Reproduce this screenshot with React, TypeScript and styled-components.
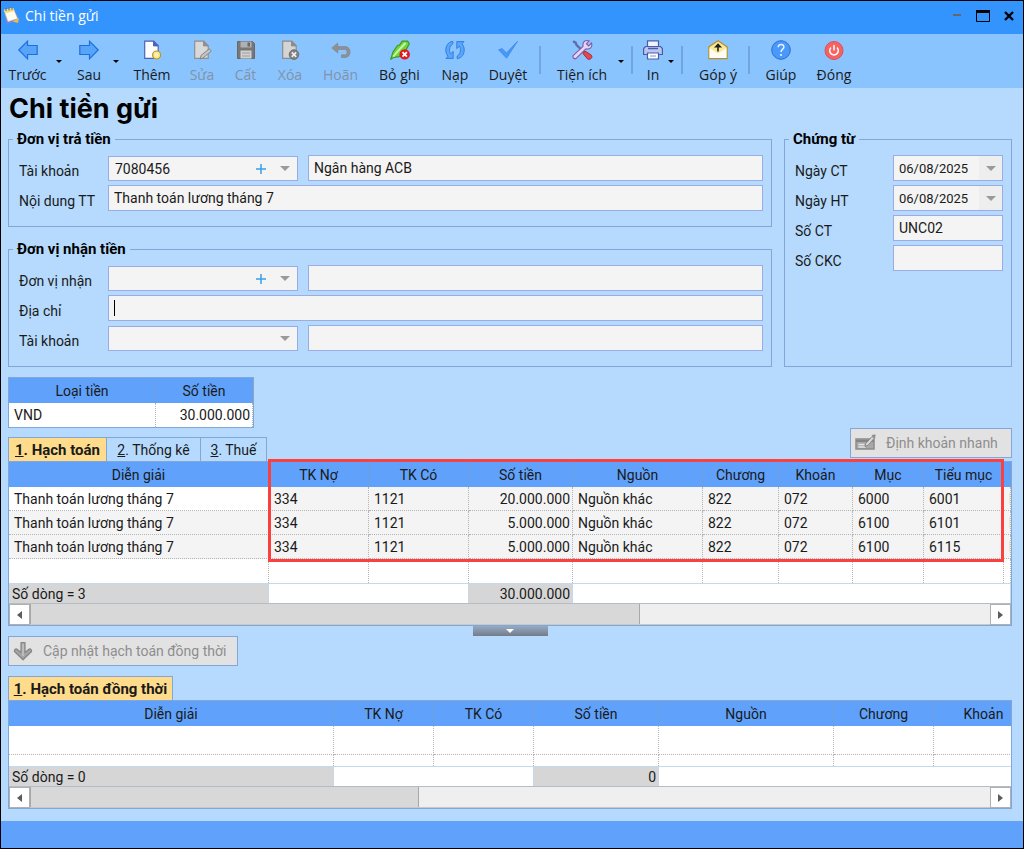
import React from "react";
import styled, { createGlobalStyle } from "styled-components";

const c = {
  page: "#b5dafe",
  title: "#3394fe",
  toolbar: "#8ac4ff",
  grid: "#60a2fb",
  line: "#83a6d6",
  field: "#f4f4f4",
  fieldLine: "#9aace4",
  dots: "#b4b4b4",
  grey: "#d6d6d6",
  soft: "#c5d9ec",
  orange: "#ffdc8c",
  text: "#1a1a1a",
};

const uiFont = `Roboto, "Liberation Sans", sans-serif`;
const barFont = `"Open Sans", "Noto Sans", sans-serif`;

const GlobalStyle = createGlobalStyle`
  *, *::before, *::after { box-sizing: border-box; }
  body { margin: 0; background: ${c.page}; }
  button, input, select { font: inherit; color: inherit; margin: 0; padding: 0; }
  svg { display: block; flex: none; }
`;

const Window = styled.div`
  display: flex;
  flex-direction: column;
  min-height: 100vh;
  border: 1px solid #000;
  background: ${c.page};
  color: ${c.text};
  font-family: ${uiFont};
  font-size: 14px;
  line-height: 18px;
`;

const TitleBar = styled.header`
  display: flex;
  align-items: center;
  height: 33px;
  padding: 0 4px 4px 2px;
  gap: 6px;
  background: ${c.title};
  color: #fff;
  font-family: ${barFont};
`;

const WindowTitle = styled.span`
  flex: 1;
`;

const WindowButton = styled.button`
  display: flex;
  justify-content: center;
  align-items: center;
  width: 20px;
  height: 20px;
  border: 0;
  background: none;
`;

const Toolbar = styled.nav`
  display: flex;
  height: 54px;
  padding: 6px 0 0;
  background: ${c.toolbar};
  font-family: ${barFont};
`;

const ToolButton = styled.button<{ $width: number }>`
  display: flex;
  flex-direction: column;
  align-items: center;
  gap: 6px;
  width: ${(p) => p.$width}px;
  height: 46px;
  border: 0;
  background: none;
  white-space: nowrap;
  &:disabled {
    color: #8193a8;
  }
`;

const MoreButton = styled.button`
  display: flex;
  justify-content: center;
  align-items: center;
  width: 10px;
  height: 42px;
  margin-right: 3px;
  border: 0;
  background: none;
`;

const Separator = styled.span`
  width: 2px;
  height: 28px;
  margin: 6px 7px 0 2px;
  background: #72a4de;
`;

const Main = styled.main`
  flex: 1;
  padding: 0 11px 12px 7px;
`;

const Heading = styled.h1`
  margin: 0;
  padding: 5px 1px 5px;
  font-family: Inter, "Liberation Sans", sans-serif;
  font-size: 27px;
  line-height: 32px;
  font-weight: 700;
  color: #000;
`;

const FormArea = styled.div`
  display: grid;
  grid-template-columns: 1fr 228px;
  gap: 12px;
`;

const FormColumn = styled.div`
  display: flex;
  flex-direction: column;
  gap: 13px;
`;

const Group = styled.fieldset`
  min-width: 0;
  margin: 0;
  padding: 7px 8px 15px 10px;
  border: 1px solid ${c.line};
`;

const Legend = styled.legend`
  margin-left: -6px;
  padding: 0 4px;
  font-size: 15px;
  font-weight: 700;
  color: #000;
`;

const Rows = styled.div`
  display: flex;
  flex-direction: column;
  gap: 4px;
`;

const Row = styled.div<{ $label: number }>`
  display: grid;
  grid-template-columns: ${(p) => p.$label}px 1fr;
  height: 26px;
`;

const Label = styled.label`
  padding-top: 7px;
`;

const Fields = styled.div`
  display: flex;
  align-items: flex-end;
  gap: 10px;
  min-width: 0;
`;

const TextBox = styled.div`
  display: flex;
  flex: 1;
  align-items: center;
  min-width: 0;
  height: 26px;
  padding: 0 5px;
  border: 1px solid ${c.fieldLine};
  background: ${c.field};
`;

const Input = styled.input`
  flex: 1;
  min-width: 0;
  height: 24px;
  border: 0;
  outline: 0;
  background: none;
`;

const DateInput = styled(Input)`
  font-size: 13px;
`;

const Caret = styled.span`
  width: 1px;
  height: 16px;
  background: #000;
`;

const ComboBox = styled.div`
  display: grid;
  grid-template-columns: 1fr 24px 24px;
  align-items: center;
  justify-items: center;
  flex: none;
  width: 190px;
  height: 25px;
  border: 1px solid ${c.fieldLine};
  background: ${c.field};
`;

const Select = styled.select`
  grid-area: 1 / 1 / 2 / 4;
  justify-self: stretch;
  height: 23px;
  padding: 0 6px;
  border: 0;
  background: none;
  appearance: none;
`;

const AddButton = styled.button`
  grid-area: 1 / 2 / 2 / 3;
  border: 0;
  background: none;
`;

const ComboArrow = styled.span`
  grid-area: 1 / 3 / 2 / 4;
  pointer-events: none;
`;

const DateButton = styled.button`
  display: flex;
  align-items: center;
  justify-content: center;
  align-self: stretch;
  width: 23px;
  margin-right: -5px;
  border: 0;
  background: #eee;
`;

const CurrencyTable = styled.table`
  width: 246px;
  margin: 10px 0 9px;
  table-layout: fixed;
  border: 1px solid ${c.line};
  border-spacing: 0;
  background: #fff;
`;

const Grid = styled.div`
  position: relative;
  border: 1px solid ${c.line};
`;

const Clip = styled.div`
  overflow: hidden;
  background: #fff;
`;

const DataTable = styled.table<{ $min: number }>`
  width: 100%;
  min-width: ${(p) => p.$min}px;
  table-layout: fixed;
  border-spacing: 0;
`;

const Th = styled.th`
  height: 25px;
  padding: 0;
  border-right: 1px solid #6d9fe0;
  background: ${c.grid};
  font-weight: 400;
  white-space: nowrap;
  overflow: hidden;
`;

const Td = styled.td<{ $shade?: boolean; $right?: boolean; $height?: number; $open?: boolean }>`
  height: ${(p) => p.$height ?? 24}px;
  padding: 0 2px 0 5px;
  border-right: 1px dotted ${c.dots};
  border-bottom: ${(p) => (p.$open ? "0" : `1px dotted ${c.dots}`)};
  background: ${(p) => (p.$shade ? c.field : "#fff")};
  text-align: ${(p) => (p.$right ? "right" : "left")};
  white-space: nowrap;
  overflow: hidden;
`;

const SumCell = styled.td<{ $fill?: boolean; $right?: boolean }>`
  height: 20px;
  padding: 0 2px 0 3px;
  border-top: 1px solid ${c.soft};
  border-right: 1px solid ${c.soft};
  background: ${(p) => (p.$fill ? c.grey : "#fff")};
  text-align: ${(p) => (p.$right ? "right" : "left")};
  line-height: 16px;
`;

const ScrollBar = styled.div`
  display: flex;
  height: 22px;
  border-top: 1px solid #b4bcc6;
  background: #efefef;
`;

const ScrollButton = styled.button`
  display: flex;
  align-items: center;
  justify-content: center;
  flex: none;
  width: 21px;
  border: 1px solid #b0b0b0;
  background: #fff;
`;

const Track = styled.div`
  flex: 1;
  border-bottom: 1px solid #c8c8c8;
`;

const Thumb = styled.div<{ $share: number }>`
  width: ${(p) => p.$share}%;
  height: 100%;
  border-right: 1px solid #a8a8a8;
  border-left: 1px solid #a8a8a8;
  background: #d8d8d8;
`;

const TabBar = styled.div`
  display: flex;
  align-items: flex-end;
  justify-content: space-between;
`;

const TabList = styled.div`
  display: flex;
  height: 24px;
`;

const Tab = styled.button<{ $width: number; $active?: boolean }>`
  width: ${(p) => p.$width}px;
  border: 1px solid ${c.line};
  border-bottom: 0;
  background: ${(p) => (p.$active ? c.orange : c.page)};
  font-size: ${(p) => (p.$active ? 15 : 14)}px;
  font-weight: ${(p) => (p.$active ? 700 : 400)};
  white-space: nowrap;
  & + & {
    border-left: 0;
  }
`;

const ActionButton = styled.button<{ $width: number }>`
  display: flex;
  align-items: center;
  gap: 10px;
  width: ${(p) => p.$width}px;
  height: 30px;
  padding: 0 4px;
  border: 1px solid ${c.line};
  background: #e2e2e2;
  white-space: nowrap;
  &:disabled {
    color: #8e8e8e;
  }
`;

const QuickWrap = styled.div`
  padding-bottom: 3px;
  margin-top: -9px;
`;

const Splitter = styled.button`
  display: flex;
  align-items: center;
  justify-content: center;
  width: 75px;
  height: 10px;
  margin: 0 auto;
  border: 0;
  background: linear-gradient(#94aac6, #747c88);
`;

const UpdateRow = styled.div`
  padding-bottom: 10px;
`;

const Highlight = styled.div`
  position: absolute;
  top: -3px;
  left: 259px;
  width: 736px;
  height: 103px;
  border: 3px solid #fb4040;
  pointer-events: none;
`;

const StatusBar = styled.footer`
  height: 27px;
  background: ${c.grid};
`;

const Down = ({ fill = "#9a9a9a", w = 10 }: { fill?: string; w?: number }) => (
  <svg width={w} height={w / 2} viewBox="0 0 10 5">
    <path d="M0 0h10L5 5z" fill={fill} />
  </svg>
);

const ArrowBox = ({ flip }: { flip?: boolean }) => (
  <svg width="20" height="20" viewBox="0 0 20 20">
    <path
      transform={flip ? "matrix(-1 0 0 1 20 0)" : undefined}
      d="M.8 10 9.5 1.2V5.5h9.7v9H9.5v4.3z"
      fill="#58a4f8"
      stroke="#1d6fe0"
      strokeWidth="1.2"
    />
  </svg>
);

const Page = ({ fill, stroke }: { fill: string; stroke: string }) => (
  <>
    <path d="M2.7 1.2h9l4.5 4.5v12.6H2.7z" fill={fill} stroke={stroke} strokeWidth="1.2" />
    <path d="M11.5 1.2v4.7h4.7z" fill={stroke} stroke={stroke} />
  </>
);

const icons: Record<string, React.ReactNode> = {
  prev: <ArrowBox />,
  next: <ArrowBox flip />,
  add: (
    <svg width="20" height="20" viewBox="0 0 20 20">
      <Page fill="#fdfdff" stroke="#4a64b4" />
      <circle cx="14.6" cy="15" r="4" fill="#ffe680" stroke="#b8942c" strokeWidth="1.2" />
      <circle cx="14.6" cy="15" r="2" fill="#fff3b8" />
    </svg>
  ),
  edit: (
    <svg width="20" height="20" viewBox="0 0 20 20">
      <Page fill="#d9d9d9" stroke="#909090" />
      <path d="m8.2 19 .9-3.6 8.2-6.6 2 2.3-8.1 6.8z" fill="#c4c4c4" stroke="#858585" />
    </svg>
  ),
  save: (
    <svg width="20" height="20" viewBox="0 0 20 20">
      <path d="M1.5 1.5h15l2 2v15h-17z" fill="#777" stroke="#686868" />
      <path d="M4.5 1.5h11v6h-11z" fill="#b0b0b0" />
      <path d="M11.5 2.5h2.5v4h-2.5z" fill="#686868" />
      <path d="M4.5 10.5h11v8h-11z" fill="#d2d2d2" />
      <path d="M6 13h8M6 16h8" stroke="#9c9c9c" />
    </svg>
  ),
  remove: (
    <svg width="20" height="20" viewBox="0 0 20 20">
      <Page fill="#d4d4d4" stroke="#8c8c8c" />
      <circle cx="14" cy="14.6" r="4.8" fill="#808080" stroke="#707070" />
      <path d="m11.8 12.4 4.4 4.4m0-4.4-4.4 4.4" stroke="#eee" strokeWidth="1.7" />
    </svg>
  ),
  undo: (
    <svg width="20" height="20" viewBox="0 0 20 20">
      <path d="M.8 8 6.800 3v3.600h7.300c6.500 0 6.800 10.600 0 11h-3.600v-2.800h3.300c3 0 3-5.200 0-5.300H6.800V13z" fill="#909090" stroke="#7e8894" strokeWidth=".7" />
    </svg>
  ),
  unpost: (
    <svg width="20" height="20" viewBox="0 0 20 20">
      <path d="M.8 19.200 3 12l4.500-6.500 2-.5 2.700-3.900h5.400l1.700 2.700-3 5.600-7 7.300-5.300.6z" fill="#6ed63c" stroke="#3e9c22" strokeWidth="1.2" />
      <path d="m3.200 16.600 6-7L15.600 3" fill="none" stroke="#c8f5a8" strokeWidth="2" />
      <circle cx="14.700" cy="14.400" r="5.200" fill="#e8141c" />
      <path d="m12.500 12.200 4.400 4.400m0-4.400-4.400 4.400" stroke="#fff" strokeWidth="1.8" />
    </svg>
  ),
  reload: (
    <svg width="20" height="20" viewBox="0 0 20 20">
      <path id="half" d="M7.800 1.300C3 2 .8 6 .8 10c0 2.600.8 4.600 2.200 6.200L1 18.400h7.200v-7l-2.600 2.400C4 11.500 3.800 6.500 7.800 4z" fill="#5aa6fa" stroke="#2a78e2" strokeWidth=".9" />
      <path transform="rotate(180 10 10)" d="M7.800 1.300C3 2 .8 6 .8 10c0 2.600.8 4.600 2.200 6.200L1 18.400h7.200v-7l-2.600 2.400C4 11.500 3.800 6.500 7.800 4z" fill="#5aa6fa" stroke="#2a78e2" strokeWidth=".9" />
    </svg>
  ),
  approve: (
    <svg width="20" height="20" viewBox="0 0 20 20">
      <path d="M.6 9.800 4.200 8.600 8.400 13 19.600 1.200 8.600 18.200z" fill="#4a98f6" stroke="#3a88ee" strokeWidth=".8" />
    </svg>
  ),
  tools: (
    <svg width="22" height="20" viewBox="0 0 22 20">
      <path d="m2 1.200 2.600 1.400 1 2.500L14 13" fill="none" stroke="#5f6cae" strokeWidth="2.400" />
      <path d="M13.800 1c2-.8 3.400-.4 4.400 0l-2.800 2.700 2.200 2.200L20.500 3c1.300 4.200-1.800 6.800-5.600 5.800L5.400 18.200c-1.600 1.700-4.600-.7-3-2.800l9.700-9C11.500 3.500 12.300 1.900 13.800 1z" fill="#e3d6f0" stroke="#8258a8" strokeWidth="1.100" />
      <path d="m12 13.600 2.200-2.400 6 3.800c2 2.400-.6 5-3.400 4.200z" fill="#e4484c" stroke="#a82c3c" />
    </svg>
  ),
  print: (
    <svg width="20" height="20" viewBox="0 0 20 20">
      <path d="M4.500.8h11v6h-11z" fill="#eef2ff" stroke="#4a5ca8" strokeWidth="1.200" />
      <path d="M2.500 6.500h15l1.900 2v6H.6v-6z" fill="#b9c6ee" stroke="#4a5ca8" strokeWidth="1.200" />
      <path d="M5 8.500h10" stroke="#4a5ca8" strokeWidth="1.500" />
      <path d="M4.500 13h11v6h-11z" fill="#fff" stroke="#4a5ca8" strokeWidth="1.200" />
      <path d="M7 16h6" stroke="#7f90cc" />
    </svg>
  ),
  feedback: (
    <svg width="20" height="20" viewBox="0 0 20 20">
      <path d="M.9 6.800 10 .8l9.100 6v11.800H.9z" fill="#fbe894" stroke="#b3902e" strokeWidth="1.300" />
      <path d="m1.500 8 8.500 5.500L18.500 8v10h-17z" fill="#fffdf6" />
      <path d="M10 11.500V5M7.800 6.800 10 4.500l2.200 2.300z" fill="#222" stroke="#222" strokeWidth="1.600" />
    </svg>
  ),
  help: (
    <svg width="20" height="20" viewBox="0 0 20 20">
      <circle cx="10" cy="10" r="9.300" fill="#4a98fa" stroke="#2a6fd0" />
      <path d="M7.200 7.300c0-3.800 6-3.600 5.700-.2-.2 2.100-2.900 2.200-2.900 5" fill="none" stroke="#e8f3ff" strokeWidth="1.500" />
      <circle cx="10" cy="15" r="1.100" fill="#e8f3ff" />
    </svg>
  ),
  close: (
    <svg width="20" height="20" viewBox="0 0 20 20">
      <circle cx="10" cy="10.500" r="9" fill="#f76161" stroke="#dc5058" />
      <path d="M7 7.500a4.300 4.300 0 1 0 6 0M10 5v5.500" fill="none" stroke="#fff" strokeWidth="1.500" />
    </svg>
  ),
};

const Tool = ({ icon, label, width, off }: { icon: string; label: string; width: number; off?: boolean }) => (
  <ToolButton $width={width} disabled={off}>
    {icons[icon]}
    {label}
  </ToolButton>
);

const More = ({ label }: { label: string }) => (
  <MoreButton aria-label={label}>
    <Down fill="#000" w={6} />
  </MoreButton>
);

const Combo = ({ id, value = "", add, label }: { id: string; value?: string; add?: boolean; label: string }) => (
  <ComboBox>
    <Select id={id} defaultValue={value} aria-label={label}>
      <option value={value}>{value}</option>
    </Select>
    {add && (
      <AddButton aria-label={`Thêm ${label}`}>
        <svg width="12" height="12" viewBox="0 0 12 12">
          <path d="M6 1v10M1 6h10" stroke="#3a9fe4" strokeWidth="1.500" />
        </svg>
      </AddButton>
    )}
    <ComboArrow>
      <Down />
    </ComboArrow>
  </ComboBox>
);

const Scroll = ({ share }: { share: number }) => (
  <ScrollBar>
    <ScrollButton aria-label="Cuộn trái">
      <svg width="5" height="8" viewBox="0 0 5 8">
        <path d="M5 0v8L0 4z" fill="#5c5c5c" />
      </svg>
    </ScrollButton>
    <Track>
      <Thumb $share={share} />
    </Track>
    <ScrollButton aria-label="Cuộn phải">
      <svg width="5" height="8" viewBox="0 0 5 8">
        <path d="M0 0v8l5-4z" fill="#5c5c5c" />
      </svg>
    </ScrollButton>
  </ScrollBar>
);

const Cols = ({ widths }: { widths: number[] }) => (
  <colgroup>
    {widths.map((w, i) => (
      <col key={i} style={{ width: w || undefined }} />
    ))}
  </colgroup>
);

const entryHeads = ["Diễn giải", "TK Nợ", "TK Có", "Số tiền", "Nguồn", "Chương", "Khoản", "Mục", "Tiểu mục", ""];
const entries = [
  ["Thanh toán lương tháng 7", "334", "1121", "20.000.000", "Nguồn khác", "822", "072", "6000", "6001", "N"],
  ["Thanh toán lương tháng 7", "334", "1121", "5.000.000", "Nguồn khác", "822", "072", "6100", "6101", "N"],
  ["Thanh toán lương tháng 7", "334", "1121", "5.000.000", "Nguồn khác", "822", "072", "6100", "6115", "N"],
];
const linkedHeads = ["Diễn giải", "TK Nợ", "TK Có", "Số tiền", "Nguồn", "Chương", "Khoản"];

export default function App() {
  return (
    <>
      <GlobalStyle />
      <Window>
        <TitleBar>
          <svg width="16" height="18" viewBox="0 0 16 18">
            <path d="m1 4 10-2 4 11-11 4z" fill="#7d86dc" />
            <path d="m1 3 9-2 4.500 10.500L5 14.500z" fill="#fffdf0" stroke="#d8d2b0" strokeWidth=".6" />
            <path d="m1 3 9-2 1.300 3L2.500 6.200z" fill="#f6dc74" />
            <path d="M3 1v3m3-3.500v3M9 0v3" stroke="#5c6a86" />
            <path d="M9.500 14.500 16 11l-1 5z" fill="#f0b848" />
          </svg>
          <WindowTitle>Chi tiền gửi</WindowTitle>
          <WindowButton aria-label="Thu nhỏ">
            <svg width="10" height="10" viewBox="0 0 10 10">
              <path d="M1 4h8" stroke="#66676d" strokeWidth="2" />
            </svg>
          </WindowButton>
          <WindowButton aria-label="Phóng to">
            <svg width="14" height="12" viewBox="0 0 14 12">
              <path d="M.5.500h13v11H.5z" fill="none" stroke="#000" />
              <path d="M0 0h14v3H0z" />
            </svg>
          </WindowButton>
          <WindowButton aria-label="Đóng cửa sổ">
            <svg width="10" height="10" viewBox="0 0 10 10">
              <path d="m1 1 8 8m0-8L1 9" stroke="#000" strokeWidth="2.400" />
            </svg>
          </WindowButton>
        </TitleBar>

        <Toolbar aria-label="Thanh công cụ">
          <Tool icon="prev" label="Trước" width={53} />
          <More label="Danh sách trước" />
          <Tool icon="next" label="Sau" width={44} />
          <More label="Danh sách sau" />
          <Tool icon="add" label="Thêm" width={56} />
          <Tool icon="edit" label="Sửa" width={44} off />
          <Tool icon="save" label="Cất" width={43} off />
          <Tool icon="remove" label="Xóa" width={46} off />
          <Tool icon="undo" label="Hoãn" width={55} off />
          <Tool icon="unpost" label="Bỏ ghi" width={63} />
          <Tool icon="reload" label="Nạp" width={48} />
          <Tool icon="approve" label="Duyệt" width={58} />
          <Separator />
          <Tool icon="tools" label="Tiện ích" width={68} />
          <More label="Thêm tiện ích" />
          <Separator />
          <Tool icon="print" label="In" width={26} />
          <More label="Tùy chọn in" />
          <Separator />
          <Tool icon="feedback" label="Góp ý" width={56} />
          <Separator />
          <Tool icon="help" label="Giúp" width={48} />
          <Tool icon="close" label="Đóng" width={58} />
        </Toolbar>

        <Main>
          <Heading>Chi tiền gửi</Heading>

          <FormArea>
            <FormColumn>
              <Group>
                <Legend>Đơn vị trả tiền</Legend>
                <Rows>
                  <Row $label={89}>
                    <Label htmlFor="payAccount">Tài khoản</Label>
                    <Fields>
                      <Combo id="payAccount" value="7080456" add label="Tài khoản" />
                      <TextBox>
                        <Input aria-label="Ngân hàng" defaultValue="Ngân hàng ACB" />
                      </TextBox>
                    </Fields>
                  </Row>
                  <Row $label={89}>
                    <Label htmlFor="content">Nội dung TT</Label>
                    <TextBox>
                      <Input id="content" defaultValue="Thanh toán lương tháng 7" />
                    </TextBox>
                  </Row>
                </Rows>
              </Group>
              <Group>
                <Legend>Đơn vị nhận tiền</Legend>
                <Rows>
                  <Row $label={89}>
                    <Label htmlFor="receiver">Đơn vị nhận</Label>
                    <Fields>
                      <Combo id="receiver" add label="Đơn vị nhận" />
                      <TextBox>
                        <Input aria-label="Tên đơn vị nhận" />
                      </TextBox>
                    </Fields>
                  </Row>
                  <Row $label={89}>
                    <Label htmlFor="address">Địa chỉ</Label>
                    <TextBox>
                      <Caret />
                      <Input id="address" />
                    </TextBox>
                  </Row>
                  <Row $label={89}>
                    <Label htmlFor="receiveAccount">Tài khoản</Label>
                    <Fields>
                      <Combo id="receiveAccount" label="Tài khoản" />
                      <TextBox>
                        <Input aria-label="Ngân hàng nhận" />
                      </TextBox>
                    </Fields>
                  </Row>
                </Rows>
              </Group>
            </FormColumn>

            <Group>
              <Legend>Chứng từ</Legend>
              <Rows>
                <Row $label={98}>
                  <Label htmlFor="docDate">Ngày CT</Label>
                  <TextBox>
                    <DateInput id="docDate" defaultValue="06/08/2025" />
                    <DateButton aria-label="Chọn ngày CT">
                      <Down />
                    </DateButton>
                  </TextBox>
                </Row>
                <Row $label={98}>
                  <Label htmlFor="postDate">Ngày HT</Label>
                  <TextBox>
                    <DateInput id="postDate" defaultValue="06/08/2025" />
                    <DateButton aria-label="Chọn ngày HT">
                      <Down />
                    </DateButton>
                  </TextBox>
                </Row>
                <Row $label={98}>
                  <Label htmlFor="docNo">Số CT</Label>
                  <TextBox>
                    <Input id="docNo" defaultValue="UNC02" />
                  </TextBox>
                </Row>
                <Row $label={98}>
                  <Label htmlFor="ckc">Số CKC</Label>
                  <TextBox>
                    <Input id="ckc" />
                  </TextBox>
                </Row>
              </Rows>
            </Group>
          </FormArea>

          <CurrencyTable>
            <Cols widths={[147, 97]} />
            <thead>
              <tr>
                <Th>Loại tiền</Th>
                <Th>Số tiền</Th>
              </tr>
            </thead>
            <tbody>
              <tr>
                <Td $open>VND</Td>
                <Td $open $right>
                  30.000.000
                </Td>
              </tr>
            </tbody>
          </CurrencyTable>

          <TabBar>
            <TabList>
              <Tab $width={99} $active>
                <u>1</u>. Hạch toán
              </Tab>
              <Tab $width={94}>
                <u>2</u>. Thống kê
              </Tab>
              <Tab $width={66}>
                <u>3</u>. Thuế
              </Tab>
            </TabList>
            <QuickWrap>
              <ActionButton $width={162} disabled>
                <svg width="21" height="18" viewBox="0 0 21 18">
                  <path d="M1 5h18v10H1z" fill="#a8a8a8" stroke="#8c8c8c" strokeWidth="1.500" />
                  <path d="M1 7h18" stroke="#858585" strokeWidth="2" />
                  <path d="M3.500 10.500h6M3.500 13h7" stroke="#e4e4e4" strokeWidth="1.300" />
                  <path d="m10 12.500.8-3L17 2.500l2.300 1.700-6.100 7z" fill="#d8d8d8" stroke="#858585" />
                  <path d="m16.500 1 4-.5-.4 4z" fill="#8a8a8a" />
                </svg>
                Định khoản nhanh
              </ActionButton>
            </QuickWrap>
          </TabBar>

          <Grid>
            <Clip>
              <DataTable $min={1002}>
                <Cols widths={[260, 100, 100, 104, 130, 76, 74, 71, 80, 0]} />
                <thead>
                  <tr>
                    {entryHeads.map((h, i) => (
                      <Th key={i}>{h}</Th>
                    ))}
                  </tr>
                </thead>
                <tbody>
                  {entries.map((row, r) => (
                    <tr key={r}>
                      {row.map((v, i) => (
                        <Td key={i} $shade={r > 0 || i > 0} $right={i === 3}>
                          {v}
                        </Td>
                      ))}
                    </tr>
                  ))}
                  <tr>
                    {entryHeads.map((_, i) => (
                      <Td key={i} $open />
                    ))}
                  </tr>
                </tbody>
                <tfoot>
                  <tr>
                    <SumCell $fill>Số dòng = 3</SumCell>
                    <SumCell colSpan={2} />
                    <SumCell $fill $right>
                      30.000.000
                    </SumCell>
                    <SumCell colSpan={6} />
                  </tr>
                </tfoot>
              </DataTable>
            </Clip>
            <Scroll share={63.5} />
            <Highlight />
          </Grid>

          <Splitter aria-label="Thu gọn">
            <Down fill="#fff" w={8} />
          </Splitter>

          <UpdateRow>
            <ActionButton $width={230} disabled>
              <svg width="20" height="20" viewBox="0 0 20 20">
                <path d="M8 1.500h4v10L16.200 8c1.600-.4 2.800 1 2.300 2.500L10 18.800 1.500 10.500C1 9 2.200 7.600 3.800 8L8 11.500z" fill="#a4a4a4" stroke="#868686" strokeWidth="1.200" strokeLinejoin="round" />
                <path d="M10 3v12" stroke="#c4c4c4" strokeWidth="1.500" />
              </svg>
              Cập nhật hạch toán đồng thời
            </ActionButton>
          </UpdateRow>

          <TabList>
            <Tab $width={165} $active>
              <u>1</u>. Hạch toán đồng thời
            </Tab>
          </TabList>
          <Grid>
            <Clip>
              <DataTable $min={1025}>
                <Cols widths={[325, 100, 100, 125, 175, 100, 0]} />
                <thead>
                  <tr>
                    {linkedHeads.map((h) => (
                      <Th key={h}>{h}</Th>
                    ))}
                  </tr>
                </thead>
                <tbody>
                  <tr>
                    {linkedHeads.map((h) => (
                      <Td key={h} $height={29} />
                    ))}
                  </tr>
                  <tr>
                    {linkedHeads.map((h) => (
                      <Td key={h} $height={11} $open />
                    ))}
                  </tr>
                </tbody>
                <tfoot>
                  <tr>
                    <SumCell $fill>Số dòng = 0</SumCell>
                    <SumCell colSpan={2} />
                    <SumCell $fill $right>
                      0
                    </SumCell>
                    <SumCell colSpan={3} />
                  </tr>
                </tfoot>
              </DataTable>
            </Clip>
            <Scroll share={40.5} />
          </Grid>
        </Main>
        <StatusBar />
      </Window>
    </>
  );
}
